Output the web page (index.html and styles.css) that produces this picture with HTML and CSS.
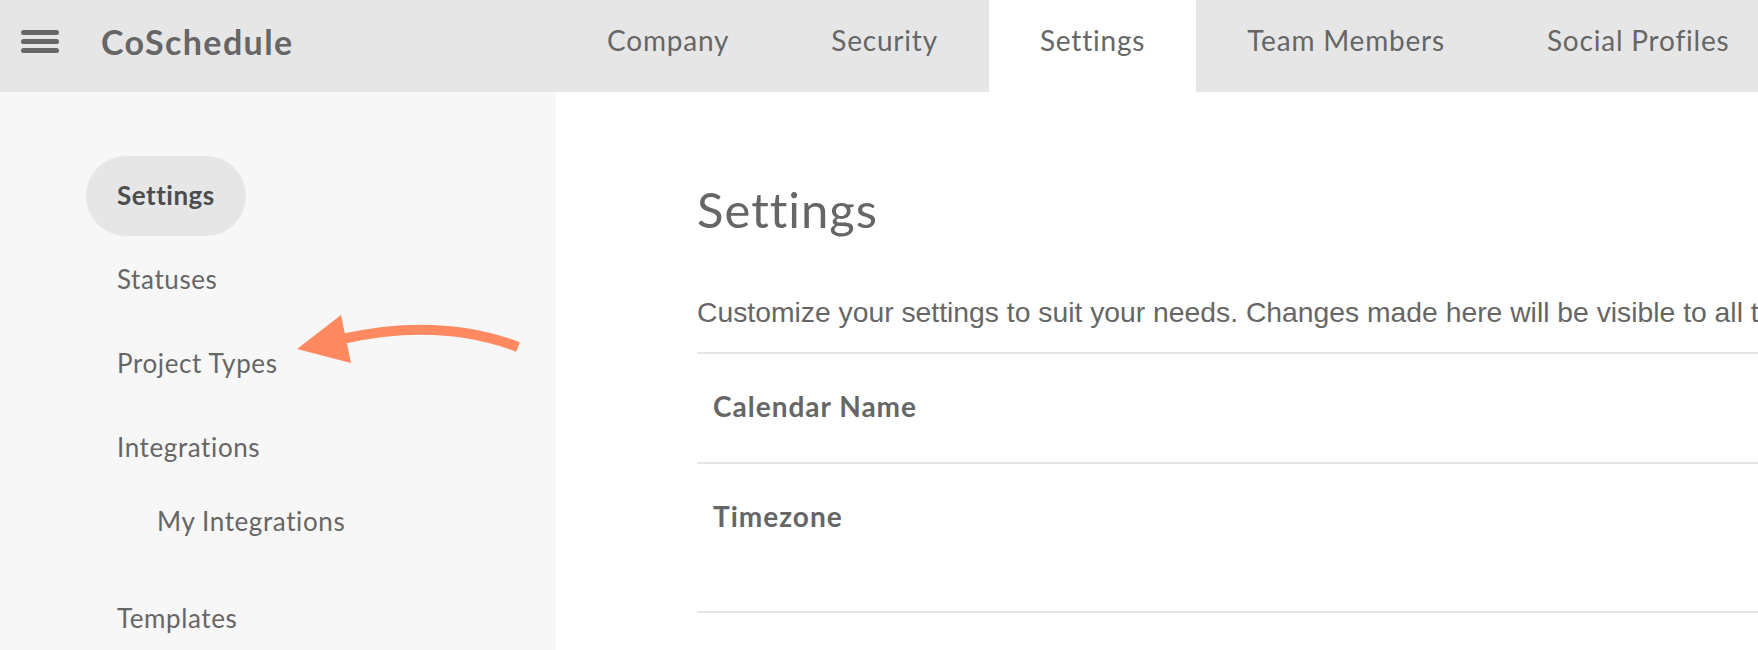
FILE: index.html
```html
<!DOCTYPE html>
<html lang="en">
<head>
<meta charset="utf-8">
<title>CoSchedule Settings</title>
<link rel="stylesheet" href="styles.css">
</head>
<body>
<header class="topbar">
  <div class="brand">
    <span class="hamburger" aria-hidden="true"><i></i><i></i><i></i></span>
    <span class="logo">CoSchedule</span>
  </div>
  <nav class="tabs">
    <a class="tab">Company</a>
    <a class="tab">Security</a>
    <a class="tab active">Settings</a>
    <a class="tab">Team Members</a>
    <a class="tab">Social Profiles</a>
  </nav>
</header>
<div class="layout">
  <aside class="sidebar">
    <ul class="side-nav">
      <li><a class="side-link active">Settings</a></li>
      <li><a class="side-link">Statuses</a></li>
      <li><a class="side-link">Project Types</a></li>
      <li><a class="side-link">Integrations</a>
        <ul class="sub-nav">
          <li><a class="side-link sub">My Integrations</a></li>
        </ul>
      </li>
      <li><a class="side-link">Templates</a></li>
    </ul>
    <svg class="arrow" width="240" height="70" viewBox="0 0 240 70" aria-hidden="true">
      <path d="M52 34 Q150 12 228 42" fill="none" stroke="#ff8a62" stroke-width="10"/>
      <polygon points="7,44 51,10 61,58" fill="#ff8a62"/>
    </svg>
  </aside>
  <main class="content">
    <h1 class="title">Settings</h1>
    <p class="desc">Customize your settings to suit your needs. Changes made here will be visible to all team members.</p>
    <div class="row"><span class="label">Calendar Name</span></div>
    <div class="row tall"><span class="label">Timezone</span></div>
  </main>
</div>
</body>
</html>
```
FILE: styles.css
```css
html, body {
  margin: 0;
  padding: 0;
  width: 1758px;
  height: 650px;
  overflow: hidden;
  background: #ffffff;
  font-family: Lato, "Open Sans", sans-serif;
  color: #666666;
}

.topbar {
  display: flex;
  height: 92px;
  background: #e6e6e6;
  overflow: hidden;
}

.brand {
  flex: 0 0 556px;
  display: flex;
  align-items: center;
  padding: 0 0 10px 21px;
  box-sizing: border-box;
  gap: 42px;
}

.hamburger {
  display: flex;
  flex-direction: column;
  gap: 4px;
  width: 38px;
}
.hamburger i {
  display: block;
  height: 5px;
  border-radius: 3px;
  background: #666666;
}

.logo {
  font-weight: 700;
  font-size: 34px;
  color: #666666;
  letter-spacing: 1.4px;
}

.tabs {
  display: flex;
  flex-shrink: 0;
  white-space: nowrap;
}

.tab {
  display: block;
  padding: 0 51px;
  line-height: 80px;
  height: 92px;
  font-size: 28px;
  letter-spacing: 0.8px;
  color: #666666;
}
.tab.active {
  background: #ffffff;
}

.layout {
  display: flex;
  height: 558px;
}

.sidebar {
  position: relative;
  flex: 0 0 556px;
  background: #f7f7f7;
  padding: 64px 0 0 86px;
  box-sizing: border-box;
}

.side-nav, .sub-nav {
  list-style: none;
  margin: 0;
  padding: 0;
}
.side-nav > li {
  margin-bottom: 4px;
}

.side-link {
  display: inline-flex;
  align-items: center;
  height: 80px;
  padding: 0 31px 3px;
  box-sizing: border-box;
  border-radius: 40px;
  font-size: 26px;
  letter-spacing: 0.6px;
  color: #666666;
}
.side-link.active {
  background: #e6e6e6;
  font-weight: 700;
  color: #4d4d4d;
  letter-spacing: 0.5px;
}

.sub-nav {
  margin-top: 4px;
  margin-bottom: 27px;
}
.side-link.sub {
  height: 60px;
  padding-left: 71px;
}

.arrow {
  position: absolute;
  left: 290px;
  top: 213px;
}

.content {
  flex: 1;
  padding-left: 141px;
  overflow: hidden;
}

.title {
  margin: 91px 0 0 0;
  font-size: 49px;
  line-height: 52px;
  font-weight: 400;
  letter-spacing: 1px;
  color: #666666;
}

.desc {
  margin: 62px 0 0 0;
  font-family: "Liberation Sans", Arial, sans-serif;
  font-size: 28.3px;
  line-height: 30px;
  white-space: nowrap;
  color: #666666;
  padding-bottom: 25px;
  border-bottom: 2px solid #e6e6e6;
}

.row {
  padding: 37px 16px 41px;
  border-bottom: 2px solid #e6e6e6;
}
.row.tall {
  padding-bottom: 80px;
}

.label {
  display: block;
  font-size: 28px;
  line-height: 30px;
  font-weight: 700;
  letter-spacing: 1px;
  color: #666666;
}
```
